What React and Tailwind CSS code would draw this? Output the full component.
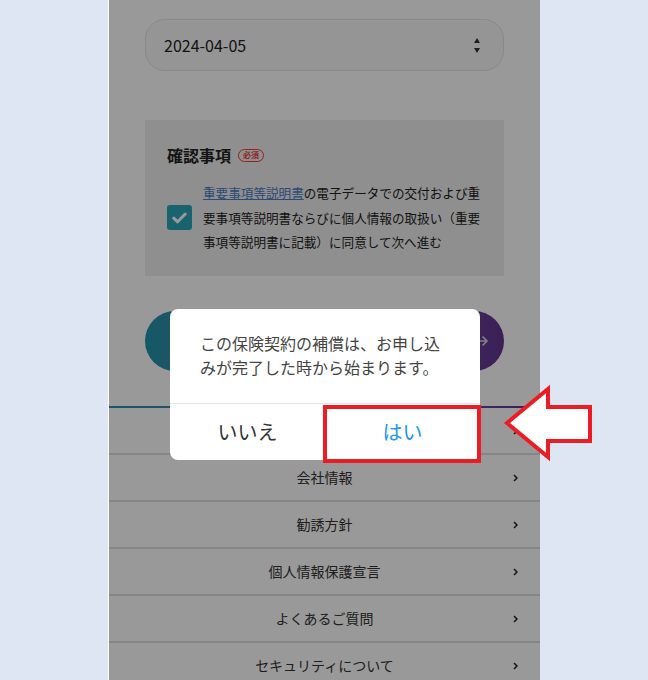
import React from 'react';

const FONT = { fontFamily: '"Noto Sans CJK JP", "Noto Sans", sans-serif' };

// first row sits under the dialog, so its label is left out
const links = ['', '会社情報', '勧誘方針', '個人情報保護宣言', 'よくあるご質問', 'セキュリティについて'];

function Chevron() {
  return (
    <svg width="5" height="8" viewBox="0 0 5 8" className="absolute right-[22px] top-1/2 -translate-y-1/2">
      <path d="M1 1l3 3-3 3" fill="none" stroke="#222" strokeWidth="1.5" />
    </svg>
  );
}

export default function App() {
  return (
    <div className="relative h-[680px] overflow-hidden bg-[#dfe6f3]" style={FONT}>
      {/* phone frame */}
      <div className="relative mx-auto h-[680px] w-[432px] overflow-hidden border-l border-white bg-white">
        <div className="px-[36px] pt-[19px]">
          {/* date input */}
          <div className="flex h-[52px] items-center justify-between rounded-[20px] border border-[#e4e4e4] bg-[#f8f8f8] pl-[18px] pr-[23px]">
            <span className="text-[16px] text-[#222]">2024-04-05</span>
            <div className="flex flex-col items-center gap-[5px]">
              <svg width="6" height="5" viewBox="0 0 6 5"><path d="M3 0L6 5H0z" fill="#333" /></svg>
              <svg width="6" height="5" viewBox="0 0 6 5"><path d="M0 0h6L3 5z" fill="#333" /></svg>
            </div>
          </div>

          {/* confirmation */}
          <div className="mt-[49px] h-[156px] bg-[#eeeeee] pl-[22px] pr-[14px] pt-[24px]">
            <div className="flex h-[22px] items-center gap-[7px]">
              <span className="text-[16px] font-bold leading-[22px] text-[#222]">確認事項</span>
              <span className="flex h-[13px] items-center rounded-full border border-[#f03c3c] px-[4px] text-[8px] font-bold leading-none text-[#f03c3c]">必須</span>
            </div>
            <div className="mt-[15px] flex items-center gap-[11px]">
              <div className="flex h-[25px] w-[25px] shrink-0 items-center justify-center rounded-[3px] bg-[#2aa6ba]">
                <svg width="15" height="12" viewBox="0 0 15 12">
                  <path d="M1.8 6.2l3.8 3.6L13.2 2" fill="none" stroke="#fff" strokeWidth="3" strokeLinecap="round" strokeLinejoin="round" />
                </svg>
              </div>
              <p className="text-[12.6px] leading-[24.5px] text-[#222]">
                <span className="text-[#4b7bc4] underline">重要事項等説明書</span>の電子データでの交付および重
                <br />
                要事項等説明書ならびに個人情報の取扱い（重要
                <br />
                事項等説明書に記載）に同意して次へ進む
              </p>
            </div>
          </div>

          {/* next button (label hidden behind the dialog) */}
          <div className="relative mt-[35px] h-[60px] rounded-full bg-gradient-to-r from-[#2094ac] to-[#663493]">
            <svg width="14" height="12" viewBox="0 0 14 12" className="absolute right-[15px] top-1/2 -translate-y-1/2">
              <path d="M1 6h11M7.5 1.5L12 6l-4.5 4.5" fill="none" stroke="#d8d8e8" strokeWidth="1.6" />
            </svg>
          </div>
        </div>

        {/* footer links */}
        <div className="mt-[35px] h-[2px] bg-gradient-to-r from-[#2094ac] to-[#663493]" />
        <div>
          {links.map((label, i) => (
            <div key={i} className="relative flex h-[47px] items-center justify-center border-b-2 border-[#dedede]">
              <span className="text-[14px] text-[#333]">{label}</span>
              <Chevron />
            </div>
          ))}
        </div>

        {/* dim overlay */}
        <div className="absolute inset-0 bg-black/40" />

        {/* dialog */}
        <div className="absolute left-[61px] top-[309px] w-[310px] overflow-hidden rounded-[8px] bg-white">
          <div className="px-[30px] pb-[24px] pt-[22px] text-[16px] leading-[24px] text-[#444]">
            この保険契約の補償は、お申し込
            <br />
            みが完了した時から始まります。
          </div>
          <div className="flex h-[57px] border-t border-[#e6e6e6]">
            <button className="flex-1 text-[20px] text-[#333]">いいえ</button>
            <button className="flex-1 text-[20px] text-[#2196f3]">はい</button>
          </div>
        </div>
      </div>

      {/* annotation */}
      <div className="absolute left-[323px] top-[405px] h-[58px] w-[158px] border-4 border-[#ec1c24]" />
      <svg width="648" height="680" className="pointer-events-none absolute left-0 top-0">
        <polygon points="507,423 548,389 548,407 590,407 590,441 548,441 548,457" fill="#fff" stroke="#ec1c24" strokeWidth="4" strokeLinejoin="miter" />
      </svg>
    </div>
  );
}
